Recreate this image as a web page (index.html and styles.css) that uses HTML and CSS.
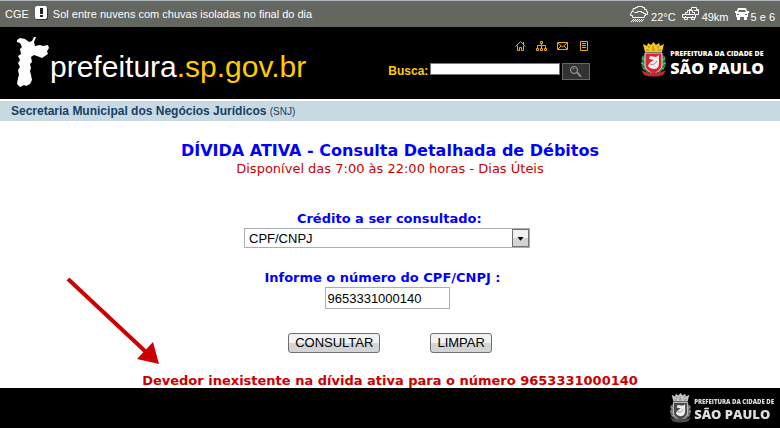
FILE: index.html
```html
<!DOCTYPE html>
<html lang="pt-BR">
<head>
<meta charset="utf-8">
<meta name="viewport" content="width=device-width, initial-scale=1">
<title>Dívida Ativa - Prefeitura de São Paulo</title>
<link rel="stylesheet" href="styles.css">
</head>
<body>
<svg class="defs" aria-hidden="true">
  <symbol id="crest" viewBox="0 0 25 35" preserveAspectRatio="none">
    <path class="crest-leaf" d="M4 13Q-1 14 1 19Q-1 24 3 28L8 32L8 12ZM21 13Q26 14 24 19Q26 24 22 28L17 32L17 12Z"/>
    <path class="crest-vein" d="M1 16l4 3M0 21l5 2M2 27l4-2M24 16l-4 3M25 21l-5 2M23 27l-4-2"/>
    <path class="crest-crown" d="M2 2L6 4L7 1L10 3L12.500 0L15 3L18 1L19 4L23 2L21 10H4Z"/>
    <path class="crest-joint" d="M5 8h3M11 8h3M17 8h3M8 4v2M12 4v3M17 4v2"/>
    <path class="crest-shield" d="M4 11H21V23Q21 28 12.500 32Q4 28 4 23Z"/>
    <path class="crest-band" d="M0 28Q6 32 12.500 30Q19 32 25 28L22 33Q12 36 3 33Z"/>
    <path class="crest-arm" d="M7 24Q8 20 13 18L8 17L9 14L15 15L18 13L18 21Q18 27 13 27Q9 27 7 24Z"/>
    <path class="crest-fold" d="M9 22Q13 24 16 19"/>
  </symbol>
</svg>

<div class="status">
  <span>CGE</span>
  <svg class="alert" viewBox="0 0 13 14" role="img" aria-label="Alerta"><rect x="1" y="1" width="12" height="13" rx="2" fill="#38342f"/><rect width="12" height="13" rx="2" fill="#fff"/><path d="M5 2h3v6H5zM5 9h3v2H5z" fill="#222"/></svg>
  <span class="forecast">Sol entre nuvens com chuvas isoladas no final do dia</span>
  <span class="metric">
    <svg class="cloud" viewBox="0 0 19 17" aria-hidden="true"><path d="M3 5.500V2.500H5.500V1.500H7.500V.5H12.500V1.500H14.500V3.500H16.500V5.500H17.500V8.500H15.500M3.500 5.500H1.500V7.500H.5V9.500H2.500V11.500H14.500V9.500H15.500V7.500H13.500V6.500H11.500V5.500H7.500V6.500H4.500"/><path stroke-dasharray="1 1" d="M3 13.500H14M2 14.500H13M1 15.500H12"/></svg>
    <span>22°C</span>
  </span>
  <span class="metric">
    <svg class="cars" viewBox="0 0 18 14" aria-hidden="true"><path d="M7.500 4V2.500H9.500V.5H14.500V2.500H16.500V7.500H14M12 3.500H16M3.500 7V5.500H5.500V3.500H10.500V5.500H12.500V7.500H13.500V10.500H.5V7.500H12M2.500 11V12.500H5.500V10M9.500 11V12.500H12.500V10M7.500 4V7M3 9.500H4M10 9.500H11"/></svg>
    <span>49km</span>
  </span>
  <span class="metric">
    <svg class="car" viewBox="0 0 14 12" aria-hidden="true"><path fill="#fff" fill-rule="evenodd" d="M3 0H11L12 3H14V5H13V9H12V12H9V9H5V12H2V9H1V5H0V3H2ZM4 2L3 4H11L10 2ZM2 6V7H4V6ZM10 6V7H12V6Z"/></svg>
    <span>5 e 6</span>
  </span>
</div>

<header class="header">
  <a class="site" href="#">
    <svg class="tree" viewBox="0 0 34 52" aria-hidden="true"><path fill="#fff" d="M1 4L4 2L9 3L13 6L16 5L18 1L20 1L18 6L19 10L24 9L27 10L32 9L33 12L31 15L32 18L29 20L26 22L21 20L18 19L15 21L16 26L14 28L15 32L14 35L15 39L16 44L14 48L10 50L8 49L4 51L1 48L2 42L3 39L2 34L4 31L2 27L4 24L2 20L5 18L4 13L6 11L4 7L1 6Z"/></svg>
    <span class="site-name">prefeitura<b>.sp.gov.br</b></span>
  </a>
  <div class="tools">
    <nav class="shortcuts" aria-label="Atalhos">
      <a href="#" aria-label="Início"><svg viewBox="0 0 11 10"><path d="M.5 5.500 5.500.5 10.500 5.500M2.500 4.500V9.500H4.500V6.500H6.500V9.500H8.500V4.500M8.500 1V3"/></svg></a>
      <a href="#" aria-label="Mapa do site"><svg viewBox="0 0 11 10"><path d="M4.500.5h2v2h-2zM5.500 3v4M1.500 7V4.500h8V7M.5 7.500h2v2h-2zM4.500 7.500h2v2h-2zM8.500 7.500h2v2h-2z"/></svg></a>
      <a href="#" aria-label="Contato"><svg viewBox="0 0 11 10"><path d="M.5 1.500h10v7H.5zM1 2l4.500 4L10 2M1 8l3-3M10 8L7 5"/></svg></a>
      <a href="#" aria-label="Notícias"><svg viewBox="0 0 11 10"><path d="M2.500.5h7v9h-7zM4 2.500h4M4 4.500h4M4 6.500h4"/></svg></a>
    </nav>
    <form class="search">
      <label for="busca">Busca:</label>
      <input id="busca" type="text">
      <button type="button" aria-label="Buscar"><svg viewBox="0 0 12 12"><circle cx="4" cy="4" r="3.500"/><path d="M6.500 6.500l4 4.500M7.500 6l4 4.500M3 3.500L4.500 2"/></svg></button>
    </form>
  </div>
  <div class="brand">
    <svg class="crest"><use href="#crest"/></svg>
    <div class="brand-text"><span>PREFEITURA DA CIDADE DE</span><strong>SÃO PAULO</strong></div>
  </div>
</header>

<div class="department"><strong>Secretaria Municipal dos Negócios Jurídicos</strong> <small>(SNJ)</small></div>

<main class="main">
  <h1>DÍVIDA ATIVA - Consulta Detalhada de Débitos</h1>
  <p class="hours">Disponível das 7:00 às 22:00 horas - Dias Úteis</p>
  <form class="query">
    <div class="fields">
      <div class="field">
        <label for="credito">&nbsp;Crédito a ser consultado:</label>
        <div class="select">
          <select id="credito"><option>CPF/CNPJ</option></select>
          <svg viewBox="0 0 17 18" aria-hidden="true"><path d="M5 8H12L8.500 12Z"/></svg>
        </div>
      </div>
      <div class="field">
        <label for="numero">Informe o número do CPF/CNPJ :&nbsp;&nbsp;</label>
        <input id="numero" type="text" value="9653331000140">
      </div>
    </div>
    <div class="actions">
      <button type="button">CONSULTAR</button>
      <button type="button">LIMPAR</button>
    </div>
  </form>
  <div class="result">
    <p>Devedor inexistente na dívida ativa para o número 9653331000140</p>
    <svg class="arrow" viewBox="0 0 94 88" aria-hidden="true"><path d="M2 2L80 75" stroke="#c00" stroke-width="4"/><path d="M93 87L71 82L87 65Z" fill="#c00"/></svg>
  </div>
</main>

<footer class="footer">
  <div class="brand brand-small">
    <svg class="crest"><use href="#crest"/></svg>
    <div class="brand-text"><span>PREFEITURA DA CIDADE DE</span><strong>SÃO PAULO</strong></div>
  </div>
</footer>
</body>
</html>
```
FILE: styles.css
```css
* { box-sizing: border-box; }
body {
  margin: 0;
  background: #fff;
  color: #000;
  font-family: "Liberation Sans", Arial, sans-serif;
  font-size: 12px;
}
svg { display: block; flex: none; }
h1, p { margin: 0; }
.defs { position: absolute; width: 0; height: 0; }

.status {
  display: flex;
  align-items: center;
  height: 27px;
  padding: 0 5px;
  border-top: 1px solid #b0b6bd;
  background: #646660;
  color: #fff;
  font-size: 11px;
}
.alert { width: 13px; height: 14px; margin: 0 5px 2px 6px; }
.forecast { flex: 1; }
.metric { display: flex; align-items: center; gap: 2px; margin-left: 6px; padding-top: 6px; }
.metric svg { fill: none; stroke: #fff; margin-top: -6px; }
.cloud { width: 19px; height: 17px; }
.cars { width: 18px; height: 14px; }
.metric .car { width: 14px; height: 12px; stroke: none; }

.header {
  display: flex;
  height: 72px;
  padding: 0 16px;
  background: #000;
}
.site { display: flex; flex: 1; padding-top: 9px; color: #fff; text-decoration: none; }
.tree { width: 34px; height: 52px; }
.site-name { padding-top: 14px; font-size: 30px; line-height: 34px; }
.site-name b { color: #fc0; font-weight: normal; }

.tools { width: 202px; margin-right: 51px; padding-top: 14px; }
.shortcuts { display: flex; justify-content: flex-end; gap: 10px; padding-right: 1px; }
.shortcuts svg { width: 11px; height: 10px; fill: none; stroke: #f0ad00; }
.search { display: flex; align-items: flex-start; margin-top: 12px; }
.search label { width: 42px; color: #fc0; font-weight: bold; line-height: 16px; }
.search input { flex: 1; min-width: 0; height: 12px; padding: 0; border: 1px solid #777; background: #fff; }
.search button {
  display: flex;
  align-items: center;
  justify-content: center;
  width: 28px;
  height: 17px;
  margin-left: 2px;
  padding: 0;
  border: 1px solid #666;
  background: #333;
}
.search button svg { width: 12px; height: 12px; fill: none; stroke: #aaa; }

.brand { display: flex; align-items: flex-start; gap: 4px; padding-top: 15px; }
.crest { width: 25px; height: 35px; }
.brand-text {
  display: flex;
  flex-direction: column;
  padding-top: 7px;
  color: #fff;
  font-family: "Open Sans", sans-serif;
  white-space: nowrap;
}
.brand-text span { font-size: 7px; font-weight: 800; line-height: 9px; }
.brand-text strong { font-size: 16px; font-weight: 800; line-height: 20px; }
.crest-leaf { fill: #208448; }
.crest-vein { fill: none; stroke: #8fb56a; }
.crest-crown { fill: #f7c71d; }
.crest-joint { fill: none; stroke: #a5801a; }
.crest-shield { fill: #df2230; stroke: #f5dce0; }
.crest-band { fill: #c42a35; }
.crest-arm { fill: #eee; }
.crest-fold { fill: none; stroke: #9b8588; }

.department {
  height: 20px;
  margin-top: 2px;
  padding-left: 11px;
  background: #c9d9e2;
  color: #134068;
  line-height: 20px;
}
.department small { font-size: 10px; }

.main {
  height: 267px;
  padding-top: 20px;
  font-family: "DejaVu Sans", Verdana, sans-serif;
  text-align: center;
}
h1 { color: #00f; font-size: 16px; line-height: 20px; }
.hours { color: #c00; font-size: 13px; line-height: 15px; }
.query { display: flex; flex-direction: column; align-items: center; margin-top: 34px; }
.fields { margin-right: 6px; }
.field { display: flex; flex-direction: column; align-items: center; margin-bottom: 21px; }
.field label { color: #00f; font-size: 13px; font-weight: bold; line-height: 18px; }
.select { position: relative; width: 286px; }
.select select, .field input {
  height: 20px;
  border: 1px solid #abadb3;
  border-radius: 0;
  background: #fff;
  color: #000;
  font-family: "Liberation Sans", Arial, sans-serif;
  font-size: 13px;
}
.select select { display: block; width: 100%; padding: 0 4px; appearance: none; }
.select svg {
  position: absolute;
  top: 1px;
  right: 1px;
  width: 17px;
  height: 18px;
  border: 1px solid #707070;
  background: linear-gradient(#f2f2f2 50%, #d4d4d4 50%);
  pointer-events: none;
}
.field input { width: 125px; height: 22px; padding: 0 2px; }
.actions { display: flex; gap: 50px; margin-top: 3px; }
.actions button {
  height: 20px;
  padding: 0 6px;
  border: 1px solid #707070;
  border-radius: 3px;
  background: linear-gradient(#f2f2f2 50%, #d4d4d4 50%);
  font-family: "Liberation Sans", Arial, sans-serif;
  font-size: 13px;
  line-height: 18px;
}
.result { position: relative; width: max-content; margin: 20px auto 0; color: #c00; font-size: 13px; font-weight: bold; line-height: 16px; }
.arrow { position: absolute; right: calc(100% - 18px); bottom: 24px; width: 94px; height: 88px; }

.footer { display: flex; justify-content: flex-end; height: 40px; padding-right: 6px; background: #000; }
.brand-small { gap: 3px; padding-top: 5px; filter: grayscale(1); }
.brand-small .crest { width: 21px; height: 30px; }
.brand-small .brand-text { padding-top: 5px; color: #ddd; }
.brand-small .brand-text span { font-size: 6px; line-height: 8px; }
.brand-small .brand-text strong { font-size: 13px; line-height: 17px; }
```
